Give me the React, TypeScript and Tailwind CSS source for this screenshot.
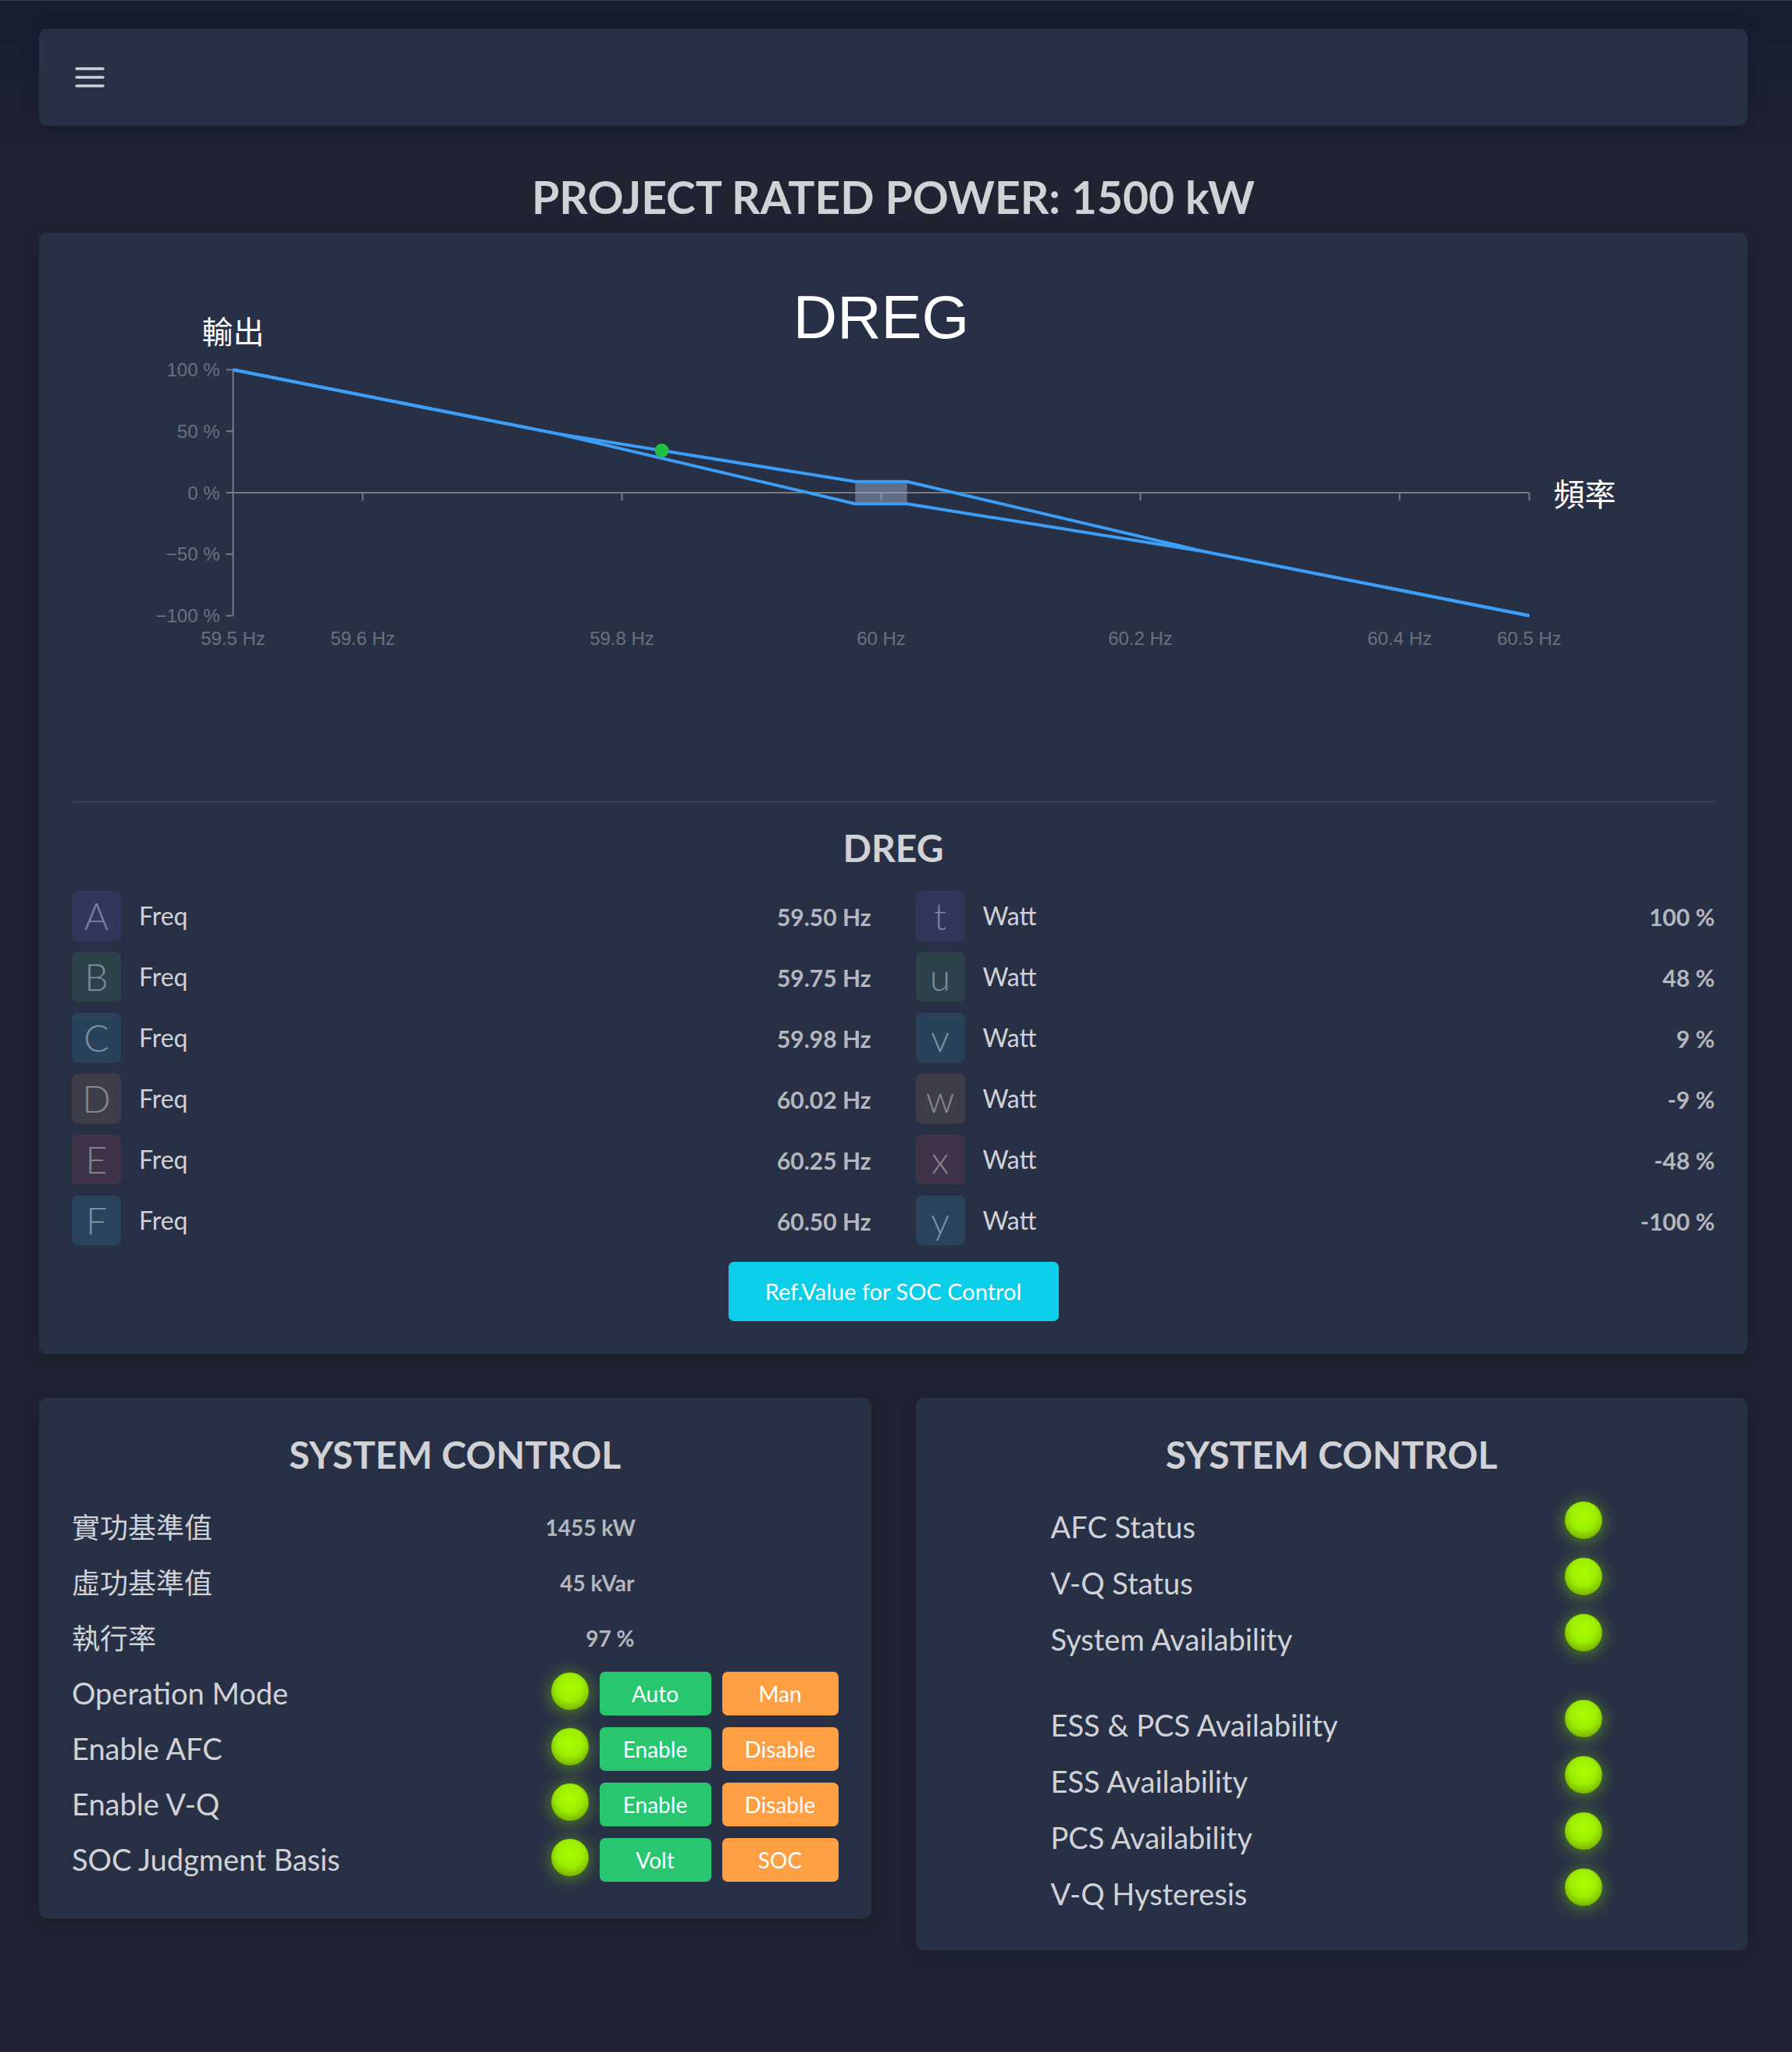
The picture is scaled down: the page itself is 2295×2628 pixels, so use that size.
import React from 'react'

const X0 = 206
const Y0 = 291
const fx = (f: number) => X0 + (f - 59.5) * 1660
const py = (p: number) => Y0 - p * 1.575

const DregChart = () => {
    const upper = [[59.5, 100], [59.75, 48], [59.98, 9], [60.02, 9], [60.25, -48], [60.5, -100]]
    const lower = [[59.5, 100], [59.75, 48], [59.98, -9], [60.02, -9], [60.25, -48], [60.5, -100]]
    const pts = (arr: number[][]) => arr.map(([f, p]) => `${fx(f)},${py(p)}`).join(' ')
    const xTicks = [59.5, 59.6, 59.8, 60, 60.2, 60.4, 60.5]
    const yTicks = [100, 50, 0, -50, -100]
    const axis = '#777b84'
    const label = '#6b707d'

    return (
        <svg viewBox="0 0 2103 686" className="block w-full h-[686px]">
            <text x={1036} y={93} textAnchor="middle" fontSize={78} fill="#ffffff" fontFamily="'Liberation Sans', Arial, sans-serif">DREG</text>
            <text x={166} y={83} fontSize={40} fill="#ffffff" dominantBaseline="central" fontFamily="'Noto Sans CJK TC', sans-serif">輸出</text>
            <text x={1897} y={291} fontSize={40} fill="#ffffff" dominantBaseline="central" fontFamily="'Noto Sans CJK TC', sans-serif">頻率</text>

            {/* axes */}
            <line x1={X0} y1={py(100)} x2={X0} y2={py(-100)} stroke={axis} strokeWidth={2} />
            <line x1={X0} y1={Y0} x2={fx(60.5)} y2={Y0} stroke={axis} strokeWidth={2} />
            {yTicks.map(p => (
                <g key={p}>
                    <line x1={X0 - 9} y1={py(p)} x2={X0} y2={py(p)} stroke={axis} strokeWidth={2} />
                    <text x={189} y={py(p)} textAnchor="end" dominantBaseline="central" fontSize={24} fill={label} fontFamily="'Liberation Sans', Arial, sans-serif">
                        {p < 0 ? `−${-p} %` : `${p} %`}
                    </text>
                </g>
            ))}
            {xTicks.map(f => (
                <g key={f}>
                    {f !== 59.5 && <line x1={fx(f)} y1={Y0} x2={fx(f)} y2={Y0 + 10} stroke={axis} strokeWidth={2} />}
                    <text x={fx(f)} y={477} textAnchor="middle" dominantBaseline="central" fontSize={24} fill={label} fontFamily="'Liberation Sans', Arial, sans-serif">
                        {`${f} Hz`}
                    </text>
                </g>
            ))}

            {/* dead band */}
            <rect x={fx(59.98)} y={py(9)} width={fx(60.02) - fx(59.98)} height={py(-9) - py(9)} fill="#9aa9c6" fillOpacity={0.5} />

            <polyline points={pts(upper)} fill="none" stroke="#3d9ef8" strokeWidth={4} />
            <polyline points={pts(lower)} fill="none" stroke="#3d9ef8" strokeWidth={4} />
            <circle cx={755} cy={237} r={9} fill="#20c040" />
        </svg>
    )
}

const Led = ({ className = '' }: { className?: string }) => (
    <span className={`block w-[48px] h-[48px] shrink-0 rounded-full bg-[radial-gradient(circle_at_50%_40%,#a8ff00_0%,#9cee00_45%,#5f8d00_100%)] shadow-[0_2px_18px_3px_rgba(137,230,0,0.38)] ${className}`} />
)

const App = () => {
    const freqRows = [
        { letter: 'A', value: '59.50 Hz', badge: 'bg-[#33355a] text-[#7b7fa2]' },
        { letter: 'B', value: '59.75 Hz', badge: 'bg-[#2c414a] text-[#7c8c96]' },
        { letter: 'C', value: '59.98 Hz', badge: 'bg-[#28425a] text-[#7b8fa3]' },
        { letter: 'D', value: '60.02 Hz', badge: 'bg-[#3e3e4a] text-[#86878f]' },
        { letter: 'E', value: '60.25 Hz', badge: 'bg-[#3f3347] text-[#897f93]' },
        { letter: 'F', value: '60.50 Hz', badge: 'bg-[#28435b] text-[#7a8fa4]' },
    ]
    const wattRows = [
        { letter: 't', value: '100 %', badge: 'bg-[#33355a] text-[#7b7fa2]' },
        { letter: 'u', value: '48 %', badge: 'bg-[#2c414a] text-[#7c8c96]' },
        { letter: 'v', value: '9 %', badge: 'bg-[#28425a] text-[#7b8fa3]' },
        { letter: 'w', value: '-9 %', badge: 'bg-[#3e3e4a] text-[#86878f]' },
        { letter: 'x', value: '-48 %', badge: 'bg-[#3f3347] text-[#897f93]' },
        { letter: 'y', value: '-100 %', badge: 'bg-[#28435b] text-[#7a8fa4]' },
    ]
    const refValues = [
        { label: '實功基準值', value: '1455 kW' },
        { label: '虛功基準值', value: '45 kVar' },
        { label: '執行率', value: '97 %' },
    ]
    const switches = [
        { label: 'Operation Mode', on: 'Auto', off: 'Man' },
        { label: 'Enable AFC', on: 'Enable', off: 'Disable' },
        { label: 'Enable V-Q', on: 'Enable', off: 'Disable' },
        { label: 'SOC Judgment Basis', on: 'Volt', off: 'SOC' },
    ]
    const statusA = ['AFC Status', 'V-Q Status', 'System Availability']
    const statusB = ['ESS & PCS Availability', 'ESS Availability', 'PCS Availability', 'V-Q Hysteresis']

    const renderColumn = (rows: typeof freqRows, name: string) => (
        <div className="flex flex-col gap-[14px]">
            {rows.map(row => (
                <div key={row.letter} className="flex items-center h-[64px]">
                    <span className={`w-[63px] h-[64px] rounded-[8px] flex items-center justify-center text-[48px] font-light leading-none ${row.badge}`}>
                        {row.letter}
                    </span>
                    <span className="ml-[23px] flex-1 text-[32px] text-[#d0d2d6]">{name}</span>
                    <span className="mt-[2px] text-[30px] font-bold text-[#b4b7bd]">{row.value}</span>
                </div>
            ))}
        </div>
    )

    return (
        <div className="min-h-screen border-t border-[#3d4352] bg-[linear-gradient(180deg,#161d31_0px,#1c2033_110px,#202332_230px)] pl-[50px] pr-[57px] pt-[36px] pb-[130px] font-['Lato','Noto_Sans_CJK_TC',sans-serif] text-[#d0d2d6]">
            <nav className="h-[124px] rounded-[10px] bg-[#283046] shadow-[0_4px_24px_rgba(0,0,0,0.2)] flex items-center pl-[46px]">
                <svg width="38" height="26" viewBox="0 0 38 26" fill="none" stroke="#d0d2d6" strokeWidth="3.4" strokeLinecap="round">
                    <line x1="2" y1="2" x2="36" y2="2" />
                    <line x1="2" y1="13" x2="36" y2="13" />
                    <line x1="2" y1="24" x2="36" y2="24" />
                </svg>
            </nav>

            <h1 className="pt-[60px] pb-[15px] text-center text-[57px] leading-[62px] font-bold text-[#d0d2d6]">
                PROJECT RATED POWER: 1500 kW
            </h1>

            <section className="rounded-[10px] bg-[#283046] p-[42px] shadow-[0_4px_24px_rgba(0,0,0,0.24)]">
                <DregChart />
                <div className="border-t-2 border-[#363e52]" />
                <h2 className="mt-[29px] text-center text-[48px] leading-[58px] font-bold text-[#d0d2d6]">DREG</h2>
                <div className="mt-[26px] grid grid-cols-2 gap-x-[57px]">
                    {renderColumn(freqRows, 'Freq')}
                    {renderColumn(wattRows, 'Watt')}
                </div>
                <button className="mx-auto mt-[21px] flex w-[423px] h-[76px] items-center justify-center rounded-[7px] bg-[#0bcfe8] text-[29px] text-white">
                    Ref.Value for SOC Control
                </button>
            </section>

            <div className="mt-[56px] grid grid-cols-2 gap-x-[57px] items-start">
                <section className="rounded-[10px] bg-[#283046] px-[42px] pt-[42px] pb-[40px] shadow-[0_4px_24px_rgba(0,0,0,0.24)]">
                    <h3 className="text-center text-[48px] leading-[62px] font-bold text-[#d0d2d6]">SYSTEM CONTROL</h3>
                    <div className="mt-[26px] flex flex-col">
                        {refValues.map(row => (
                            <div key={row.label} className="flex items-center h-[71px]">
                                <span className="flex-1 text-[36px] text-[#d0d2d6]">{row.label}</span>
                                <div className="w-[375px]">
                                    <span className="block w-[114px] text-right whitespace-nowrap text-[28px] font-bold text-[#b4b7bd]">{row.value}</span>
                                </div>
                            </div>
                        ))}
                        {switches.map(row => (
                            <div key={row.label} className="flex items-center h-[71px]">
                                <span className="flex-1 text-[38px] text-[#d0d2d6]">{row.label}</span>
                                <div className="flex items-center gap-[14px]">
                                    <Led className="mb-[6px]" />
                                    <span className="w-[143px] h-[56px] rounded-[7px] bg-[#28c76f] flex items-center justify-center text-[28px] text-white">{row.on}</span>
                                    <span className="w-[149px] h-[56px] rounded-[7px] bg-[#ff9f43] flex items-center justify-center text-[28px] text-white">{row.off}</span>
                                </div>
                            </div>
                        ))}
                    </div>
                </section>

                <section className="rounded-[10px] bg-[#283046] px-[42px] pt-[42px] pb-[37px] shadow-[0_4px_24px_rgba(0,0,0,0.24)]">
                    <h3 className="text-center text-[48px] leading-[62px] font-bold text-[#d0d2d6]">SYSTEM CONTROL</h3>
                    <div className="mt-[25px] pl-[131px] pr-[144px]">
                        {statusA.map(label => (
                            <div key={label} className="flex items-center justify-between h-[72px]">
                                <span className="text-[38px] text-[#d0d2d6]">{label}</span>
                                <Led className="mb-[16px]" />
                            </div>
                        ))}
                        <div className="mt-[38px]">
                            {statusB.map(label => (
                                <div key={label} className="flex items-center justify-between h-[72px]">
                                    <span className="text-[38px] text-[#d0d2d6]">{label}</span>
                                    <Led className="mb-[16px]" />
                                </div>
                            ))}
                        </div>
                    </div>
                </section>
            </div>
        </div>
    )
}

export default App
